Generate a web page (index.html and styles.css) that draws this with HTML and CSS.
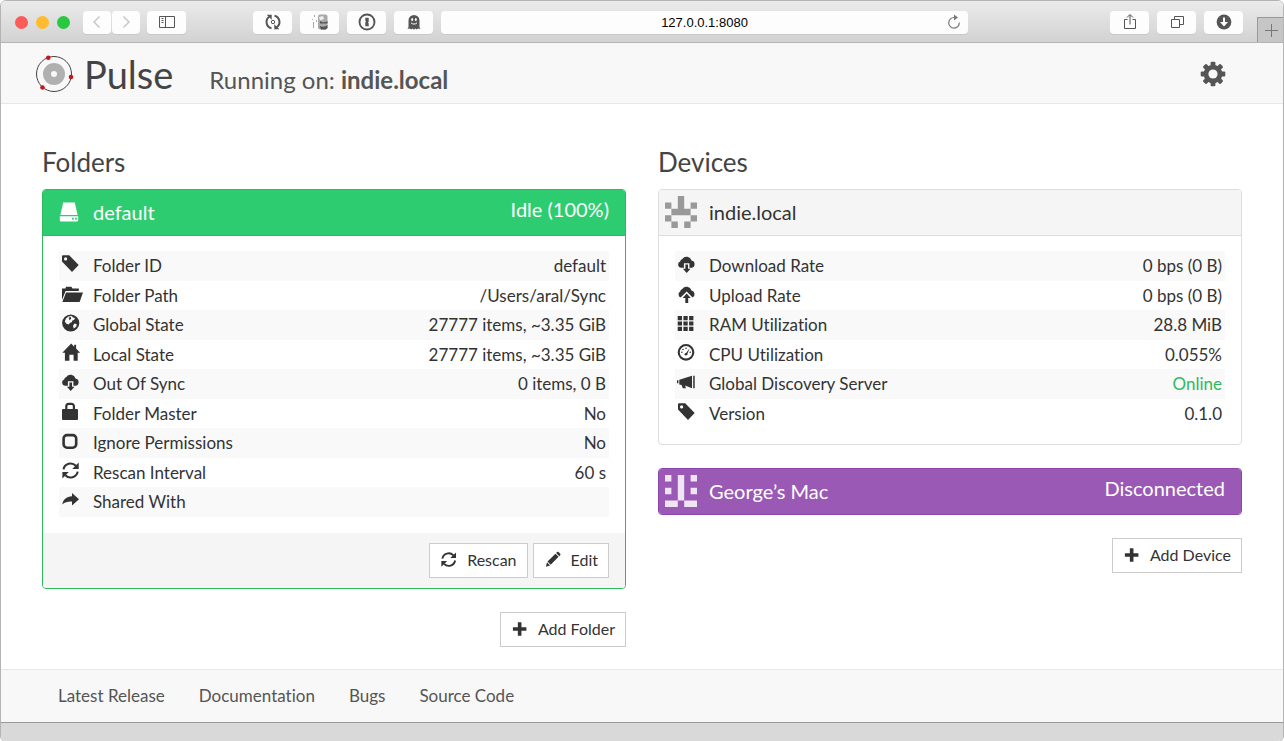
FILE: index.html
```html
<!DOCTYPE html>
<html lang="en">
<head>
<meta charset="utf-8">
<title>Pulse</title>
<link rel="stylesheet" href="styles.css">
</head>
<body>
<svg class="sprite" aria-hidden="true">
  <symbol id="tag" viewBox="0 0 22 20"><path fill-rule="evenodd" d="M1 2.3a1 1 0 0 1 1-1h6.2L17.7 11 11 18 1 7.6zM4.6 3.3a1.6 1.6 0 1 0 0 3.2 1.6 1.6 0 0 0 0-3.2z"/></symbol>
  <symbol id="folder" viewBox="0 0 22 20"><path d="M1 16V4.6h3.4l.6-1.9h5.4l1 1.9h6.4v2.5H4.6z"/><path d="M5 8.4h17L18.6 18H1.4z"/></symbol>
  <symbol id="globe" viewBox="0 0 22 20"><circle cx="9.7" cy="10" r="8.6"/><path fill="#f9f9f9" d="M7.400 3.400l3.400-.4 1.200 1.600 2 .4-1 2-1.600.6-.6 1.600-1.800.6-1.200 1.800-2.400-.8-1.600-2.400L5 5.400zM13.400 10.600l2.400.6-.6 2.600-2.400 1.800-.8-2.600z"/><path d="M7.800 4.600l2-.6.4 1.800-1.800 1.400z"/></symbol>
  <symbol id="home" viewBox="0 0 22 20"><path d="M10.2.6l3 3.1V1.8h1.900v3.800l4 4.200h-2.400v7.900h-4.100v-6H8.400v6H3.900V9.800H1.300z"/></symbol>
  <symbol id="cloud-down" viewBox="0 0 22 20"><path d="M4 13.800a3.200 3.200 0 0 1-.8-6.200 3 3 0 0 1 2.100-2.700 5.200 5.200 0 0 1 9.200 1.700 3.700 3.700 0 0 1 .4 7.200h-2.500V9.300H6.900v4.500z"/><path d="M8.400 10.400h2.600v4.400h2.500l-3.800 4.300-3.800-4.300h2.500z"/></symbol>
  <symbol id="cloud-up" viewBox="0 0 22 20"><path d="M3.600 13.400a3.200 3.200 0 0 1-.4-5.800 3 3 0 0 1 2.100-2.700 5.200 5.200 0 0 1 9.200 1.700 3.700 3.700 0 0 1 1.100 6.900L9.700 7.500z"/><path d="M9.700 9.400l4.100 4.500h-2.600v5H8.300v-5H5.600z"/></symbol>
  <symbol id="lock" viewBox="0 0 22 20"><path d="M5.300 8V4.200a2.400 2.400 0 0 1 2.400-2.400h2.800a2.400 2.400 0 0 1 2.400 2.400V8" fill="none" stroke="currentColor" stroke-width="2.200"/><path d="M2 7h14a1 1 0 0 1 1 1v9a1 1 0 0 1-1 1H2a1 1 0 0 1-1-1V8a1 1 0 0 1 1-1z"/></symbol>
  <symbol id="square" viewBox="0 0 22 20"><rect x="2.600" y="4.100" width="12.600" height="12.600" rx="3.400" fill="none" stroke="currentColor" stroke-width="2.600"/></symbol>
  <symbol id="refresh" viewBox="0 0 22 20"><path d="M2.500 8.400A7.200 7.200 0 0 1 14.800 4.800M16.700 10.600A7.200 7.200 0 0 1 4.400 14.200" fill="none" stroke="currentColor" stroke-width="2.100"/><path d="M17.700 1.600v6.300h-6.400zM1.400 17.400v-6.300h6.400z"/></symbol>
  <symbol id="share" viewBox="0 0 22 20"><path d="M11 3l7 6.200-7 6.300v-3.900c-4-.2-7 .5-9.700 3 .6-4.900 4.200-8 9.700-8.300z"/></symbol>
  <symbol id="grid" viewBox="0 0 22 20"><path d="M.7 3H5v4.200H.7zM6.400 3h4.300v4.200H6.400zM12.100 3h4.300v4.200h-4.300zM.7 8.400H5v4.200H.7zM6.400 8.400h4.300v4.200H6.400zM12.100 8.400h4.300v4.200h-4.300zM.7 13.800H5V18H.7zM6.400 13.800h4.300V18H6.400zM12.100 13.800h4.300V18h-4.300z"/></symbol>
  <symbol id="gauge" viewBox="0 0 22 20"><circle cx="9" cy="9.300" r="7.300" fill="none" stroke="currentColor" stroke-width="2.100"/><path d="M8 11.500L12.600 5.200 10 12z"/><circle cx="8.900" cy="11.200" r="1.300"/><circle cx="4.900" cy="9.300" r=".8"/><circle cx="6" cy="6.500" r=".8"/><circle cx="9" cy="5.200" r=".8"/><circle cx="13.200" cy="9.300" r=".8"/></symbol>
  <symbol id="horn" viewBox="0 0 22 20"><path d="M0 8.200h1.400v3H0zM2.300 7.800L15 3.700v12.500L8 13.600l1 2.600H5.800l-1.200-3.300-2.300-.4zM16.200 3.700h1.500v12.500h-1.500z"/></symbol>
  <symbol id="pencil" viewBox="0 0 22 20"><path d="M12.600 3l3.500 3.500-8.800 8.800-3.500-3.500zM13.400 2.200l1-1c.6-.5 1.200-.5 1.700 0l1.800 1.800c.5.5.5 1.100 0 1.700l-1 1zM3.200 12.600l3.400 3.400L2 17.500z"/></symbol>
  <symbol id="plus" viewBox="0 0 22 20"><path d="M7.500 2.500h4V8H17v4h-5.500v5.500h-4V12H2V8h5.500z"/></symbol>
  <symbol id="drive" viewBox="0 0 20 20"><path d="M4.200.5h11.600L18.600 13H1.400z"/><path fill-rule="evenodd" d="M.8 14.200h18.400V18a1.500 1.500 0 0 1-1.500 1.500H2.300A1.500 1.500 0 0 1 .8 18zM13 15.800v1.800h1.900v-1.800zM16 15.800v1.800h1.900v-1.800z"/></symbol>
</svg>

<div class="window">
  <div class="toolbar">
    <div class="lights"><span class="light red"></span><span class="light amber"></span><span class="light green"></span></div>
    <div class="nav">
      <button class="tool narrow faint" aria-label="Back"><svg width="20" height="20" viewBox="0 0 20 20"><path d="M12.500 4.500L7 10l5.500 5.500"/></svg></button>
      <button class="tool narrow faint" aria-label="Forward"><svg width="20" height="20" viewBox="0 0 20 20"><path d="M7.500 4.500L13 10l-5.500 5.500"/></svg></button>
    </div>
    <button class="tool" aria-label="Sidebar"><svg width="20" height="20" viewBox="0 0 20 20"><path d="M2.500 4.500h15v11h-15zM8.500 4.500v11M4.500 6.500h2M4.500 8.500h2M4.500 10.500h2"/></svg></button>
    <div class="extensions">
      <button class="tool" aria-label="Sync"><svg width="20" height="20" viewBox="0 0 20 20"><path stroke-width="2" d="M8.500 16.300A6.400 6.400 0 0 1 6.300 4.800M11.500 3.700a6.400 6.400 0 0 1 2.200 11.500"/><path class="solid" d="M3.700 2.800h5v5zM16.300 17.200h-5v-5z"/><circle cx="10" cy="10" r="1.700"/></svg></button>
      <button class="tool" aria-label="Profile"><svg width="20" height="20" viewBox="0 0 20 20"><rect x="8" y="2.500" width="9.500" height="15" rx="2" fill="#aaa" stroke="none"/><path class="solid" d="M10 9c3 2 5 1.500 7.500 0v2.500H10zM9.500 14c3 1 6 1 8-1v3l-2 1.500H11z"/><path fill="#eee" stroke="none" d="M9 5l4-1 1 3-4 1.500z"/><path stroke="#aaa" d="M4.500 3v2M2.500 7v1M3.500 10v6M6.500 8v2"/></svg></button>
      <button class="tool" aria-label="Passwords"><svg width="20" height="20" viewBox="0 0 20 20"><circle cx="10" cy="10" r="7.500" stroke-width="1.900"/><path class="solid" d="M8.300 5.700h3.400v4l-.8.800.8.800v3H8.300v-4l.8-.8-.8-.8z"/></svg></button>
      <button class="tool" aria-label="Privacy"><svg width="20" height="20" viewBox="0 0 20 20"><path class="solid" d="M4.500 8.500a5.500 5.500 0 0 1 11 0V15l1 2-2.200-.6-1.500 1.200-1.400-1.200L10 17.700l-1.400-1.300-1.400 1.200-1.500-1.200-2.200.6 1-2z"/><ellipse cx="8.200" cy="7.500" rx="1" ry="1.500" fill="#fff" stroke="none"/><ellipse cx="11.800" cy="7.500" rx="1" ry="1.500" fill="#fff" stroke="none"/><path stroke="#fff" d="M7 10.800c1.500 1.700 4.500 1.700 6 0"/></svg></button>
    </div>
    <div class="address">
      <input class="url" type="text" value="127.0.0.1:8080" aria-label="Address">
      <button class="reload" aria-label="Reload"><svg width="16" height="16" viewBox="0 0 16 16"><path fill="none" stroke="#777" stroke-width="1.200" d="M9 3.500H8A5.300 5.300 0 1 0 13.300 8.500"/><path fill="#777" d="M8 .5l4 3-4 3z"/></svg></button>
    </div>
    <div class="actions">
      <button class="tool" aria-label="Share"><svg width="20" height="20" viewBox="0 0 20 20"><path d="M7.500 7.500h-3v9h11v-9h-3M10 12.500V3M7 5.500l3-3 3 3"/></svg></button>
      <button class="tool" aria-label="Tabs"><svg width="20" height="20" viewBox="0 0 20 20"><path d="M4.500 7.500h8v8h-8zM7.500 7V4.500h9v8H13"/></svg></button>
      <button class="tool" aria-label="Downloads"><svg width="20" height="20" viewBox="0 0 20 20"><circle class="solid" cx="10" cy="10" r="7.400"/><path fill="#fff" stroke="none" d="M9 5.500h2V10h3l-4 4.500L6 10h3z"/></svg></button>
    </div>
    <button class="new-tab" aria-label="New tab"><svg width="14" height="14" viewBox="0 0 14 14"><path d="M7.500 1v13M1 7.500h13" stroke="#777" stroke-width="1"/></svg></button>
  </div>

  <header class="masthead">
    <svg class="logo" width="40" height="40" viewBox="0 0 40 40"><circle cx="20" cy="20" r="17.500" fill="none" stroke="#444" stroke-width="1"/><circle cx="20" cy="20" r="7" fill="none" stroke="#b0b0b0" stroke-width="8"/><g fill="#c4161c"><circle cx="14.300" cy="3.800" r="2.300"/><circle cx="37" cy="23" r="2.300"/><circle cx="8.500" cy="33.500" r="2.300"/></g></svg>
    <h1 class="brand">Pulse</h1>
    <p class="running">Running on: <strong>indie.local</strong></p>
    <button class="settings" aria-label="Settings"><svg width="26" height="26" viewBox="-13 -13 26 26"><g fill="#555"><rect x="-2.400" y="-12.300" width="4.800" height="24.600" rx="1"/><rect x="-2.400" y="-12.300" width="4.800" height="24.600" rx="1" transform="rotate(45)"/><rect x="-2.400" y="-12.300" width="4.800" height="24.600" rx="1" transform="rotate(90)"/><rect x="-2.400" y="-12.300" width="4.800" height="24.600" rx="1" transform="rotate(135)"/><circle r="9.300"/></g><circle r="4.600" fill="#f8f8f8"/></svg></button>
  </header>

  <main class="content">
    <section class="column">
      <h2 class="title">Folders</h2>
      <article class="panel active">
        <div class="panel-head"><svg class="drive" width="20" height="20"><use href="#drive"/></svg><h3 class="name">default</h3><span class="status">Idle (100%)</span></div>
        <div class="panel-body">
          <table class="facts">
            <tr><th scope="row"><svg class="icon"><use href="#tag"/></svg>Folder ID</th><td>default</td></tr>
            <tr><th scope="row"><svg class="icon"><use href="#folder"/></svg>Folder Path</th><td>/Users/aral/Sync</td></tr>
            <tr><th scope="row"><svg class="icon"><use href="#globe"/></svg>Global State</th><td>27777 items, ~3.35 GiB</td></tr>
            <tr><th scope="row"><svg class="icon"><use href="#home"/></svg>Local State</th><td>27777 items, ~3.35 GiB</td></tr>
            <tr><th scope="row"><svg class="icon"><use href="#cloud-down"/></svg>Out Of Sync</th><td>0 items, 0 B</td></tr>
            <tr><th scope="row"><svg class="icon"><use href="#lock"/></svg>Folder Master</th><td>No</td></tr>
            <tr><th scope="row"><svg class="icon"><use href="#square"/></svg>Ignore Permissions</th><td>No</td></tr>
            <tr><th scope="row"><svg class="icon"><use href="#refresh"/></svg>Rescan Interval</th><td>60 s</td></tr>
            <tr><th scope="row"><svg class="icon"><use href="#share"/></svg>Shared With</th><td></td></tr>
          </table>
        </div>
        <div class="panel-foot">
          <button class="btn"><svg class="btn-icon"><use href="#refresh"/></svg>Rescan</button>
          <button class="btn"><svg class="btn-icon"><use href="#pencil"/></svg>Edit</button>
        </div>
      </article>
      <button class="btn add"><svg class="btn-icon"><use href="#plus"/></svg>Add Folder</button>
    </section>

    <section class="column">
      <h2 class="title">Devices</h2>
      <article class="panel">
        <div class="panel-head device"><svg class="identicon" width="32" height="32" viewBox="0 0 5 5"><path fill="#999" d="M2 0h1v2H2zM0 1h1v1H0zM4 1h1v1H4zM1 2h3v1H1zM0 3h1v1H0zM4 3h1v1H4zM1 4h1v1H1zM3 4h1v1H3z"/></svg><h3 class="name">indie.local</h3></div>
        <div class="panel-body">
          <table class="facts">
            <tr><th scope="row"><svg class="icon"><use href="#cloud-down"/></svg>Download Rate</th><td>0 bps (0 B)</td></tr>
            <tr><th scope="row"><svg class="icon"><use href="#cloud-up"/></svg>Upload Rate</th><td>0 bps (0 B)</td></tr>
            <tr><th scope="row"><svg class="icon"><use href="#grid"/></svg>RAM Utilization</th><td>28.8 MiB</td></tr>
            <tr><th scope="row"><svg class="icon"><use href="#gauge"/></svg>CPU Utilization</th><td>0.055%</td></tr>
            <tr><th scope="row"><svg class="icon"><use href="#horn"/></svg>Global Discovery Server</th><td class="online">Online</td></tr>
            <tr><th scope="row"><svg class="icon"><use href="#tag"/></svg>Version</th><td>0.1.0</td></tr>
          </table>
        </div>
      </article>
      <article class="panel offline">
        <div class="panel-head device"><svg class="identicon" width="32" height="32" viewBox="0 0 5 5"><path fill="#eee4f3" d="M2 0h1v4H2zM0 0h1v1H0zM4 0h1v1H4zM0 2h1v1H0zM4 2h1v1H4zM0 4h2v1H0zM3 4h2v1H3z"/></svg><h3 class="name">George’s Mac</h3><span class="status">Disconnected</span></div>
      </article>
      <button class="btn add"><svg class="btn-icon"><use href="#plus"/></svg>Add Device</button>
    </section>
  </main>

  <footer class="links">
    <a href="#">Latest Release</a>
    <a href="#">Documentation</a>
    <a href="#">Bugs</a>
    <a href="#">Source Code</a>
  </footer>
  <div class="window-edge"></div>
</div>
</body>
</html>
```
FILE: styles.css
```css
* { box-sizing: border-box; }

body {
  margin: 0;
  background: #fff;
  color: #333;
  font-family: Lato, "Open Sans", sans-serif;
  font-size: 17px;
  font-variant-ligatures: none;
}

button { font: inherit; color: inherit; cursor: pointer; }
h1, h2, h3, p { margin: 0; font-weight: 400; }
svg { display: block; flex: none; }
.sprite { position: absolute; width: 0; height: 0; }
symbol { fill: currentColor; }

.window {
  display: flex;
  flex-direction: column;
  min-height: 100vh;
  border: 1px solid #b4b4b4;
  border-radius: 6px;
  overflow: hidden;
}

/* Browser toolbar */
.toolbar {
  display: flex;
  align-items: center;
  height: 42px;
  padding: 1px 0 0 14px;
  background: linear-gradient(#ebebeb, #d2d2d2);
  border-bottom: 1px solid #b4b4b4;
}
.lights { display: flex; gap: 8px; margin-right: 13px; }
.light { width: 13px; height: 13px; border-radius: 50%; }
.red { background: #fc5b57; }
.amber { background: #fdbc2f; }
.green { background: #28c840; }
.nav { display: flex; gap: 1px; margin-right: 7px; }
.tool {
  display: flex;
  align-items: center;
  justify-content: center;
  width: 39px;
  height: 23px;
  padding: 0;
  border: 0;
  border-radius: 4px;
  background: #fdfdfd;
  box-shadow: 0 1px 0 #c8c8c8;
}
.tool svg { fill: none; stroke: #555; stroke-width: 1; }
.tool .solid { fill: #555; stroke: none; }
.narrow { width: 28px; }
.faint svg { stroke: #c4c4c4; stroke-width: 1.4; }
.extensions { display: flex; gap: 8px; margin: 0 8px 0 67px; }
.address { position: relative; flex: 1; }
.url {
  display: block;
  width: 100%;
  height: 23px;
  border: 0;
  border-radius: 4px;
  background: #fdfdfd;
  box-shadow: 0 1px 0 #c8c8c8;
  font: 13px "Liberation Sans", sans-serif;
  text-align: center;
}
.reload {
  position: absolute;
  top: 3px;
  right: 6px;
  padding: 0;
  border: 0;
  background: none;
}
.actions { display: flex; gap: 8px; margin: 0 14px 0 142px; }
.new-tab {
  display: flex;
  align-items: center;
  justify-content: center;
  align-self: flex-end;
  width: 26px;
  height: 25px;
  padding: 0;
  border: 1px solid #999;
  border-width: 1px 0 0 1px;
  background: #c6c6c6;
}

/* Application header */
.masthead {
  display: flex;
  align-items: center;
  height: 61px;
  padding: 1px 57px 0 33px;
  background: #f8f8f8;
  border-bottom: 1px solid #e7e7e7;
  color: #555;
}
.brand {
  margin: 0 36px 0 10px;
  color: #444;
  font-size: 38px;
  line-height: 58px;
}
.running {
  padding-top: 12px;
  font-size: 24px;
  line-height: 46px;
}
.settings {
  margin-left: auto;
  padding: 0;
  border: 0;
  background: none;
}

/* Folder and device columns */
.content {
  display: grid;
  grid-template-columns: 1fr 1fr;
  gap: 32px;
  flex: 1;
  padding: 40px 41px 22px;
}
.column {
  display: flex;
  flex-direction: column;
  align-items: stretch;
}
.title {
  margin-bottom: 9px;
  color: #444;
  font-size: 26px;
  line-height: 36px;
}
.panel {
  margin-bottom: 23px;
  border: 1px solid #ddd;
  border-radius: 4px;
  overflow: hidden;
}
.panel-head {
  display: flex;
  align-items: center;
  height: 46px;
  padding: 0 16px 2px;
  background: #f5f5f5;
  border-bottom: 1px solid #ddd;
  line-height: 24px;
}
.name { font-size: 20px; }
.status { margin-left: auto; padding-bottom: 5px; font-size: 20px; }
.device { padding-left: 6px; }
.drive { margin-right: 14px; fill: currentColor; }
.identicon { margin-right: 12px; }
.active { border-color: #2fb85c; }
.active .panel-head { background: #2ecc71; border-color: #2fb85c; color: #fff; }
.offline { border-color: #8e44ad; }
.offline .panel-head { height: 45px; background: #9b59b6; border: 0; color: #fff; }
.panel-body { padding: 15px 16px 16px; }

.facts { width: 100%; border-collapse: collapse; }
.facts th, .facts td { padding: 0 3px 0 2px; line-height: 29px; }
.facts tr:nth-child(odd) > * { line-height: 30px; background: #f9f9f9; }
.facts th { display: flex; font-weight: 400; text-align: left; }
.facts td { height: 29px; text-align: right; }
.icon { width: 22px; height: 20px; margin: 3px 10px 0 0; }
.facts .online { color: #2dba5e; }

.panel-foot {
  display: flex;
  justify-content: flex-end;
  gap: 5px;
  padding: 10px 16px;
  background: #f5f5f5;
}
.btn {
  display: flex;
  align-items: center;
  height: 35px;
  padding: 0 10px 2px;
  border: 1px solid #ccc;
  background: #fff;
  font-size: 16px;
}
.btn-icon { width: 20px; height: 18px; margin-right: 7px; }
.add { align-self: flex-end; }

/* Page footer */
.links {
  display: flex;
  gap: 34px;
  padding: 0 57px;
  background: #f8f8f8;
  border-top: 1px solid #e7e7e7;
  line-height: 52px;
}
.links a { color: #555; text-decoration: none; }
.window-edge {
  height: 19px;
  background: #d9d9d9;
  border-top: 1px solid #999;
}
```
